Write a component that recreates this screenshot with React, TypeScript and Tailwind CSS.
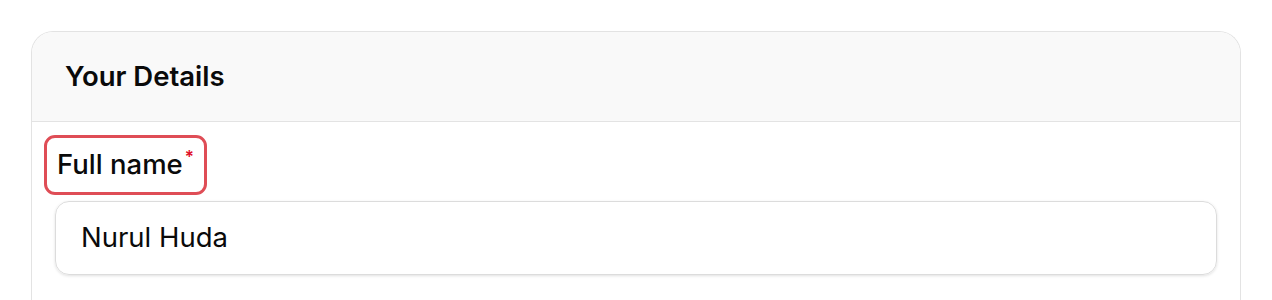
export default function App() {
  return (
    <div className="min-h-screen bg-white pt-[31px] px-[31px] font-['Inter',sans-serif]">
      <div className="w-[1210px] rounded-t-[22px] border border-[#e3e3e3] border-b-0 overflow-hidden">
        <div className="h-[90px] bg-[#f9f9f9] border-b border-[#e3e3e3] flex items-center px-[33px]">
          <h2 className="text-[27.5px] font-semibold text-[#0a0a0a]">Your Details</h2>
        </div>
        <div className="bg-white px-[23px] pt-[13px] pb-10">
          <label className="inline-flex items-center -ml-[11px] px-[10px] h-[60px] border-[3px] border-[#df4d56] rounded-[11px]">
            <span className="text-[27.5px] font-medium text-[#0a0a0a]">Full name</span>
            <span className="text-[#e0102a] text-[17px] leading-none font-semibold self-start mt-[11px] ml-[2px]">*</span>
          </label>
          <div className="mt-[6px] h-[74px] rounded-[14px] border border-[#dcdcdc] shadow-[0_1px_3px_rgba(0,0,0,0.12)] flex items-center px-[25px]">
            <span className="text-[27.5px] text-[#0a0a0a]">Nurul Huda</span>
          </div>
        </div>
      </div>
    </div>
  );
}
